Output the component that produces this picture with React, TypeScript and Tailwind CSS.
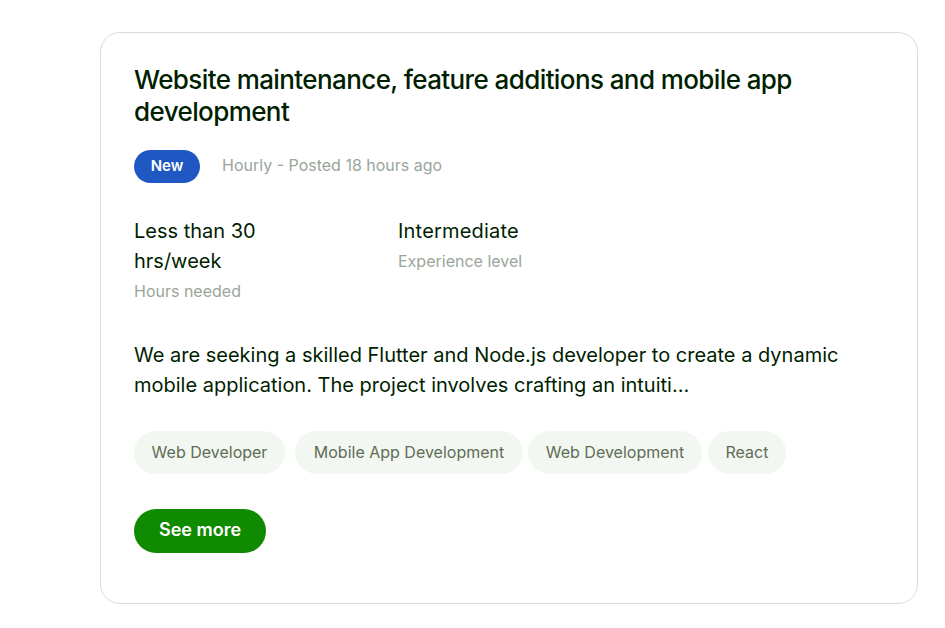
import React from "react";

const tags = [
  { label: "Web Developer", cls: "w-[151px] mr-[10px]" },
  { label: "Mobile App Development", cls: "w-[228px] mr-[5px]" },
  { label: "Web Development", cls: "w-[174px] mr-[6px]" },
  { label: "React", cls: "w-[78px]" },
];

export default function App() {
  return (
    <div
      className="min-h-[628px] w-[945px] bg-white pt-[32px] pl-[100px]"
      style={{ fontFamily: 'Inter, "Liberation Sans", Arial, sans-serif' }}
    >
      <div className="w-[818px] h-[572px] rounded-[20px] border border-[#d5e0d5] px-[33px] pt-[31px] text-[#001e00]">
        <h2 className="text-[26px] leading-[32px] font-medium tracking-[-0.6px] text-[#001e00]">
          Website maintenance, feature additions and mobile app development
        </h2>
        <div className="mt-[22px] flex items-center">
          <span className="flex h-[33px] w-[66px] items-center justify-center rounded-full bg-[#1f57c3] text-[15px] font-semibold text-white">
            New
          </span>
          <span className="ml-[22px] pb-[4px] text-[16px] text-[#9aa59a]">Hourly - Posted 18 hours ago</span>
        </div>
        <div className="mt-[33px] flex">
          <div className="w-[264px]">
            <div className="w-[150px] text-[20px] leading-[30px] text-[#001e00]">Less than 30 hrs/week</div>
            <div className="text-[16px] leading-[30px] text-[#9aa59a]">Hours needed</div>
          </div>
          <div>
            <div className="text-[20px] leading-[30px] tracking-[0.2px] text-[#001e00]">Intermediate</div>
            <div className="text-[16px] leading-[30px] text-[#9aa59a]">Experience level</div>
          </div>
        </div>
        <p className="mt-[34px] w-[750px] text-[20px] leading-[30px] text-[#001e00]">
          We are seeking a skilled Flutter and Node.js developer to create a dynamic mobile application. The project
          involves crafting an intuiti…
        </p>
        <div className="mt-[31px] flex">
          {tags.map((t) => (
            <span
              key={t.label}
              className={`flex h-[43px] items-center justify-center rounded-full bg-[#f2f7f2] pb-[1px] text-[16px] text-[#5e6d55] ${t.cls}`}
            >
              {t.label}
            </span>
          ))}
        </div>
        <button className="mt-[35px] flex h-[44px] w-[132px] items-center justify-center rounded-full bg-[#108a00] pb-[3px] text-[18px] font-semibold text-white">
          See more
        </button>
      </div>
    </div>
  );
}
